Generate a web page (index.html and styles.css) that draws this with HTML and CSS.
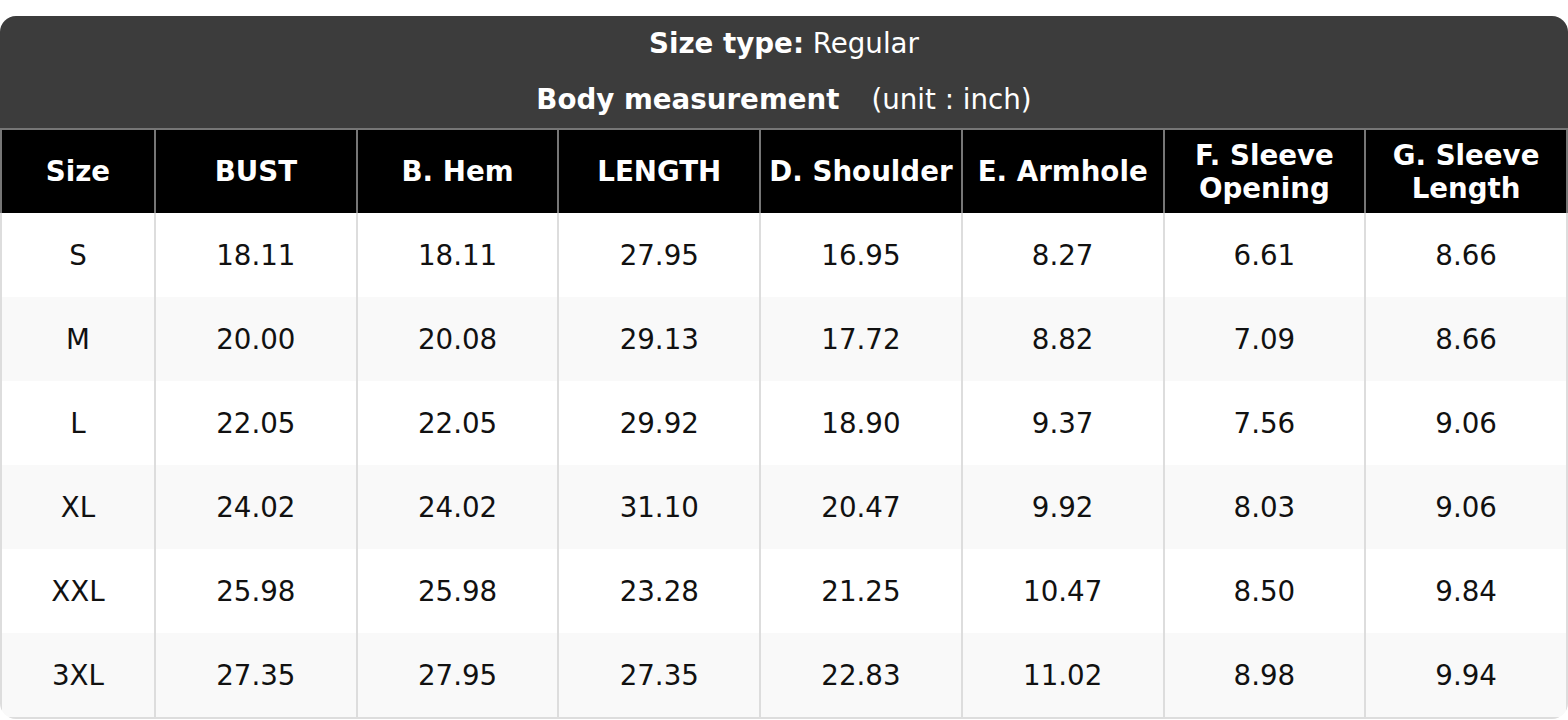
FILE: index.html
```html
<!DOCTYPE html>
<html>
<head>
<meta charset="utf-8">
<link rel="stylesheet" href="styles.css">
</head>
<body>
<div class="chart">
  <div class="title">
    <div class="title-line"><b>Size type:</b> Regular</div>
    <div class="title-line"><b>Body measurement</b><span class="unit">(unit : inch)</span></div>
  </div>
  <table class="sizes">
    <colgroup>
      <col class="c-size">
      <col><col><col><col><col><col><col>
    </colgroup>
    <thead>
      <tr>
        <th>Size</th><th>BUST</th><th>B. Hem</th><th>LENGTH</th><th>D. Shoulder</th><th>E. Armhole</th><th>F. Sleeve<br>Opening</th><th>G. Sleeve<br>Length</th>
      </tr>
    </thead>
    <tbody>
      <tr><td>S</td><td>18.11</td><td>18.11</td><td>27.95</td><td>16.95</td><td>8.27</td><td>6.61</td><td>8.66</td></tr>
      <tr><td>M</td><td>20.00</td><td>20.08</td><td>29.13</td><td>17.72</td><td>8.82</td><td>7.09</td><td>8.66</td></tr>
      <tr><td>L</td><td>22.05</td><td>22.05</td><td>29.92</td><td>18.90</td><td>9.37</td><td>7.56</td><td>9.06</td></tr>
      <tr><td>XL</td><td>24.02</td><td>24.02</td><td>31.10</td><td>20.47</td><td>9.92</td><td>8.03</td><td>9.06</td></tr>
      <tr><td>XXL</td><td>25.98</td><td>25.98</td><td>23.28</td><td>21.25</td><td>10.47</td><td>8.50</td><td>9.84</td></tr>
      <tr><td>3XL</td><td>27.35</td><td>27.95</td><td>27.35</td><td>22.83</td><td>11.02</td><td>8.98</td><td>9.94</td></tr>
    </tbody>
  </table>
</div>
</body>
</html>
```
FILE: styles.css
```css
html, body {
  margin: 0;
  padding: 0;
  background: #ffffff;
}
body {
  padding-top: 16px;
  font-family: "DejaVu Sans", sans-serif;
  font-size: 27.7px;
}
.chart {
  width: 1568px;
  border-radius: 16px;
  overflow: hidden;
  background: #ffffff;
}
.title {
  background: #3c3c3c;
  color: #ffffff;
  text-align: center;
}
.title-line {
  height: 56px;
  line-height: 56px;
  white-space: nowrap;
}
.title-line b {
  font-weight: bold;
}
.unit {
  margin-left: 32px;
}
.sizes {
  width: 1568px;
  border-collapse: collapse;
  table-layout: fixed;
}
.c-size {
  width: 154px;
}
.sizes th {
  background: #000000;
  color: #ffffff;
  font-weight: bold;
  height: 83px;
  padding: 0;
  line-height: 33px;
  text-align: center;
  border: 2px solid #767676;
  border-bottom: none;
}
.sizes td {
  height: 84px;
  padding: 0;
  text-align: center;
  color: #111111;
  border-left: 2px solid #dddddd;
  border-right: 2px solid #dddddd;
}
.sizes tbody tr:nth-child(even) td {
  background: #f9f9f9;
}
.sizes tbody tr:last-child td {
  border-bottom: 2px solid #dddddd;
}
```
